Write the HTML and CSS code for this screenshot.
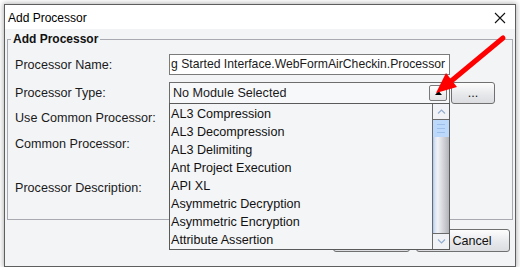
FILE: index.html
```html
<!DOCTYPE html>
<html><head>
  <meta charset="utf-8">
  <title>Add Processor</title>
  <link rel="stylesheet" href="styles.css">
</head><body>
<div class="window">
  <div class="titlebar">
    <span class="title">Add Processor</span>
    <svg class="close" width="12" height="12" viewBox="0 0 12 12"><path d="M1 1L11 11M11 1L1 11" stroke="#111" stroke-width="1.1" fill="none"/></svg>
  </div>
  <div class="client">
    <fieldset class="group">
      <legend>Add Processor</legend>
      <div class="row r-name">
        <label>Processor Name:</label>
        <div class="textfield">g Started Interface.WebFormAirCheckin.Processor</div>
      </div>
      <div class="row r-type">
        <label>Processor Type:</label>
        <div class="combo">
          <span class="combo-text">No Module Selected</span>
          <span class="combo-btn"><svg width="7" height="4" viewBox="0 0 7 4"><path d="M0 4L3.5 0L7 4Z" fill="#000"/></svg></span>
          <div class="popup">
            <ul class="items">
              <li>AL3 Compression</li>
              <li>AL3 Decompression</li>
              <li>AL3 Delimiting</li>
              <li>Ant Project Execution</li>
              <li>API XL</li>
              <li>Asymmetric Decryption</li>
              <li>Asymmetric Encryption</li>
              <li>Attribute Assertion</li>
            </ul>
            <div class="vscroll">
              <div class="sb-btn up"><svg width="9" height="5" viewBox="0 0 9 5"><path d="M1 4.5L4.5 1L8 4.5" stroke="#93add0" stroke-width="1.2" fill="none"/></svg></div>
              <div class="sb-thumb"><i></i><i></i><i></i></div>
              <div class="sb-track"></div>
              <div class="sb-btn down"><svg width="9" height="5" viewBox="0 0 9 5"><path d="M1 0.5L4.5 4L8 0.5" stroke="#93add0" stroke-width="1.2" fill="none"/></svg></div>
            </div>
          </div>
        </div>
        <button class="btn dots">...</button>
      </div>
      <div class="row r-use"><label>Use Common Processor:</label></div>
      <div class="row r-common"><label>Common Processor:</label></div>
      <div class="row r-desc"><label>Processor Description:</label></div>
    </fieldset>
    <div class="buttons">
      <button class="btn ok">OK</button>
      <button class="btn cancel">Cancel</button>
    </div>
  </div>
  <svg class="pointer" width="520" height="270" viewBox="0 0 520 270">
    <line x1="503" y1="38" x2="450" y2="82" stroke="#f00" stroke-width="5" stroke-linecap="round"/>
    <polygon points="436,93 457,87 446,73" fill="#f00"/>
  </svg>
</div>
</body></html>
```

FILE: styles.css
```css
* { box-sizing: border-box; }
body {
  margin: 0;
  background-color: #ffffff;
  font-family: "Liberation Sans", Arial, sans-serif;
  font-size: 12.6px;
  color: #1a1a1a;
}
.window {
  position: relative;
  margin: 4px 0 0 4px;
  width: 512px;
  height: 263px;
  border: 1px solid #5e5e5e;
  background-color: #f3f4f6;
  box-shadow: 0 0 5px 1px rgba(0,0,0,0.28);
  display: flex;
  flex-direction: column;
}
.titlebar {
  height: 24px;
  background-color: #ffffff;
  display: flex;
  align-items: center;
  padding: 1px 9px 0 3px;
}
.title { flex: 1; font-size: 12px; color: #000; }
.close { display: block; }
.client {
  flex: 1;
  padding-top: 2px;
  display: flex;
  flex-direction: column;
}
.group {
  margin: 0 2px 0 2px;
  padding: 7px 0 0 3px;
  border: 1px solid #a9aab1;
  min-width: 0;
}
.group > legend {
  padding: 0 2px;
  font-weight: bold;
  font-size: 12px;
  line-height: 16px;
  color: #111;
}
.row {
  display: flex;
  align-items: center;
  padding-left: 4px;
}
.row > label { width: 154px; flex: none; }
.r-name { height: 21px; margin-bottom: 7px; }
.r-type { height: 22px; }
.r-use { height: 28px; }
.r-common { height: 24px; }
.r-desc { height: 63px; }

.textfield {
  width: 281px;
  height: 21px;
  border: 1px solid #7b7b7b;
  background-color: #ffffff;
  padding-left: 1px;
  font-size: 12.2px;
  line-height: 19px;
  white-space: nowrap;
  overflow: hidden;
}
.combo {
  position: relative;
  width: 281px;
  height: 22px;
  border: 1px solid #6d6d6d;
  background-color: #f7f8fa;
  display: flex;
  align-items: center;
}
.combo-text { flex: 1; padding-left: 3px; }
.combo-btn {
  width: 18px;
  height: 16px;
  margin-right: 2px;
  border: 1px solid #7a7a7a;
  border-radius: 2px;
  background: linear-gradient(#ffffff, #e2e3e6);
  display: flex;
  align-items: center;
  justify-content: center;
}
.combo-btn svg { display: block; }
.popup {
  position: absolute;
  top: 100%;
  left: -1px;
  width: 281px;
  height: 147px;
  border: 1px solid #5a5a5a;
  background-color: #f4f5f7;
  display: flex;
  z-index: 2;
}
.items {
  flex: 1;
  list-style: none;
  margin: 0;
  padding: 1px 0 0 1px;
}
.items li {
  height: 18px;
  line-height: 18px;
  white-space: nowrap;
  color: #111;
}
.vscroll {
  width: 17px;
  border-left: 1px solid #6a6a6a;
  display: flex;
  flex-direction: column;
}
.sb-btn {
  height: 16px;
  background-color: #f1f2f5;
  display: flex;
  align-items: center;
  justify-content: center;
}
.sb-btn svg { display: block; }
.sb-btn.up { border-bottom: 1px solid #6a6a6a; }
.sb-btn.down { border-top: 1px solid #6a6a6a; }
.sb-thumb {
  height: 17px;
  background-color: #bcd9fb;
  display: flex;
  flex-direction: column;
  justify-content: center;
  align-items: center;
  gap: 3px;
}
.sb-thumb i { display: block; width: 8px; height: 1px; background-color: #9dbfe9; }
.sb-track {
  flex: 1;
  background: linear-gradient(to right, #a9c6f0 0, #d9e4f4 12%, #f1f2f5 30%, #c9cacf 75%, #b3b4ba 100%);
}
.btn {
  font-family: "Liberation Sans", Arial, sans-serif;
  font-size: 12.6px;
  color: #111;
  border: 1px solid #707070;
  border-radius: 3px;
  background: linear-gradient(#fdfdfd, #e6e7ea 60%, #dcdde0);
  padding: 0;
}
.dots {
  width: 44px;
  height: 22px;
  margin-left: 1px;
  line-height: 14px;
}
.buttons {
  display: flex;
  justify-content: flex-end;
  gap: 6px;
  margin-top: 9px;
  padding-right: 5px;
}
.ok, .cancel { height: 23px; }
.ok { width: 77px; }
.cancel { width: 94px; padding-left: 18px; }
.pointer {
  position: absolute;
  left: -5px;
  top: -5px;
  pointer-events: none;
  z-index: 5;
}
```
